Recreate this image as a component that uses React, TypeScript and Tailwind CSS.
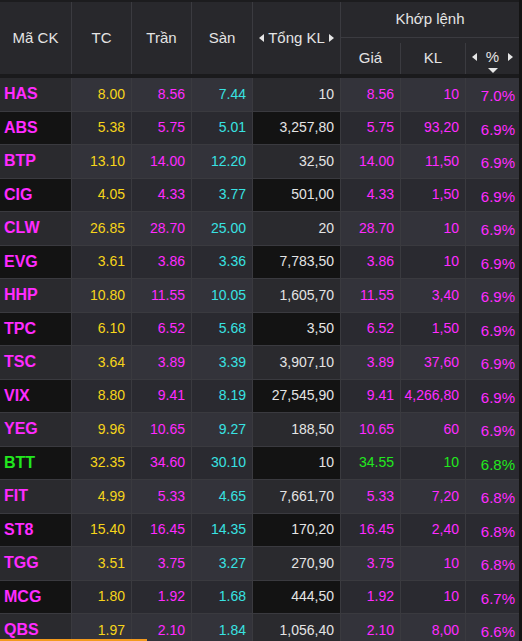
import React from "react";

type Row = {
  sym: string;
  tc: string;
  ceil: string;
  floor: string;
  vol: string;
  price: string;
  kl: string;
  pct: string;
  up?: "ceil" | "green";
};

const rows: Row[] = [
  { sym: "HAS", tc: "8.00", ceil: "8.56", floor: "7.44", vol: "10", price: "8.56", kl: "10", pct: "7.0%" },
  { sym: "ABS", tc: "5.38", ceil: "5.75", floor: "5.01", vol: "3,257,80", price: "5.75", kl: "93,20", pct: "6.9%" },
  { sym: "BTP", tc: "13.10", ceil: "14.00", floor: "12.20", vol: "32,50", price: "14.00", kl: "11,50", pct: "6.9%" },
  { sym: "CIG", tc: "4.05", ceil: "4.33", floor: "3.77", vol: "501,00", price: "4.33", kl: "1,50", pct: "6.9%" },
  { sym: "CLW", tc: "26.85", ceil: "28.70", floor: "25.00", vol: "20", price: "28.70", kl: "10", pct: "6.9%" },
  { sym: "EVG", tc: "3.61", ceil: "3.86", floor: "3.36", vol: "7,783,50", price: "3.86", kl: "10", pct: "6.9%" },
  { sym: "HHP", tc: "10.80", ceil: "11.55", floor: "10.05", vol: "1,605,70", price: "11.55", kl: "3,40", pct: "6.9%" },
  { sym: "TPC", tc: "6.10", ceil: "6.52", floor: "5.68", vol: "3,50", price: "6.52", kl: "1,50", pct: "6.9%" },
  { sym: "TSC", tc: "3.64", ceil: "3.89", floor: "3.39", vol: "3,907,10", price: "3.89", kl: "37,60", pct: "6.9%" },
  { sym: "VIX", tc: "8.80", ceil: "9.41", floor: "8.19", vol: "27,545,90", price: "9.41", kl: "4,266,80", pct: "6.9%" },
  { sym: "YEG", tc: "9.96", ceil: "10.65", floor: "9.27", vol: "188,50", price: "10.65", kl: "60", pct: "6.9%" },
  { sym: "BTT", tc: "32.35", ceil: "34.60", floor: "30.10", vol: "10", price: "34.55", kl: "10", pct: "6.8%", up: "green" },
  { sym: "FIT", tc: "4.99", ceil: "5.33", floor: "4.65", vol: "7,661,70", price: "5.33", kl: "7,20", pct: "6.8%" },
  { sym: "ST8", tc: "15.40", ceil: "16.45", floor: "14.35", vol: "170,20", price: "16.45", kl: "2,40", pct: "6.8%" },
  { sym: "TGG", tc: "3.51", ceil: "3.75", floor: "3.27", vol: "270,90", price: "3.75", kl: "10", pct: "6.8%" },
  { sym: "MCG", tc: "1.80", ceil: "1.92", floor: "1.68", vol: "444,50", price: "1.92", kl: "10", pct: "6.7%" },
  { sym: "QBS", tc: "1.97", ceil: "2.10", floor: "1.84", vol: "1,056,40", price: "2.10", kl: "8,00", pct: "6.6%" },
];

const grid = "grid grid-cols-[72px_60px_60px_61px_88px_60px_65px_53px]";

const Left = () => (
  <span className="inline-block w-0 h-0 border-y-[4px] border-y-transparent border-r-[5px] border-r-[#e6e6e6]" />
);
const Right = () => (
  <span className="inline-block w-0 h-0 border-y-[4px] border-y-transparent border-l-[5px] border-l-[#e6e6e6]" />
);

function Header() {
  return (
    <div className={`${grid} h-[74px] bg-[#28282c] text-[15px] text-[#e4e4e4] border-t-2 border-[#1c1c1e]`}>
      <div className="row-span-2 flex items-center justify-center border-r border-[#3b3b40]">Mã CK</div>
      <div className="row-span-2 flex items-center justify-center border-r border-[#3b3b40]">TC</div>
      <div className="row-span-2 flex items-center justify-center border-r border-[#3b3b40]">Trần</div>
      <div className="row-span-2 flex items-center justify-center border-r border-[#3b3b40]">Sàn</div>
      <div className="row-span-2 flex items-center justify-center gap-1 border-r border-[#3b3b40]">
        <Left />
        Tổng KL
        <Right />
      </div>
      <div className="col-span-3 flex items-center justify-center border-b border-[#3b3b40] h-[36px]">Khớp lệnh</div>
      <div className="col-start-6 flex items-center justify-center border-r border-[#3b3b40]">Giá</div>
      <div className="flex items-center justify-center border-r border-[#3b3b40]">KL</div>
      <div className="relative flex items-center justify-center gap-[9px] pb-[3px]">
        <Left />
        %
        <Right />
        <span className="absolute left-1/2 -translate-x-1/2 bottom-[1px] w-0 h-0 border-x-[5px] border-x-transparent border-t-[5px] border-t-[#e6e6e6]" />
      </div>
    </div>
  );
}

function DataRow({ r, i }: { r: Row; i: number }) {
  const odd = i % 2 === 0;
  const dark = odd ? "bg-[#2a2a2e]" : "bg-[#131313]";
  const light = odd ? "bg-[#33333a]" : "bg-[#2a2a30]";
  const col = r.up === "green" ? "text-[#22e81e]" : "text-[#ff2bff]";
  const cell = "flex items-center justify-end pr-[6px] border-r border-[#3a3a3f]";
  return (
    <div className={`${grid} h-[33.5px] border-b border-[#3a3a3f] text-[14px]`}>
      <div className={`${dark} flex items-center pl-[4px] font-bold text-[16px] ${col} border-r border-[#3a3a3f]`}>{r.sym}</div>
      <div className={`${light} ${cell} text-[#f7d51a]`}>{r.tc}</div>
      <div className={`${light} ${cell} text-[#ff2bff]`}>{r.ceil}</div>
      <div className={`${light} ${cell} text-[#38e2e2]`}>{r.floor}</div>
      <div className={`${dark} ${cell} pr-[4px] text-[#e4e4e4]`}>{r.vol}</div>
      <div className={`${light} ${cell} ${col}`}>{r.price}</div>
      <div className={`${light} ${cell} ${col}`}>{r.kl}</div>
      <div className={`${light} flex items-center justify-end pr-[4px] pt-[4px] text-[15px] ${col}`}>{r.pct}</div>
    </div>
  );
}

export default function App() {
  return (
    <div
      className="relative h-[641px] w-[522px] overflow-hidden bg-[#141414]"
      style={{ fontFamily: '"Liberation Sans", Arial, sans-serif' }}
    >
      <div className="w-[519px]">
        <Header />
        <div className="h-[4px] bg-[#1a1a1c]" />
        {rows.map((r, i) => (
          <DataRow key={r.sym} r={r} i={i} />
        ))}
      </div>
      <div className="absolute left-0 bottom-0 h-[2px] w-[147px] bg-[#f39a1e]" />
    </div>
  );
}
